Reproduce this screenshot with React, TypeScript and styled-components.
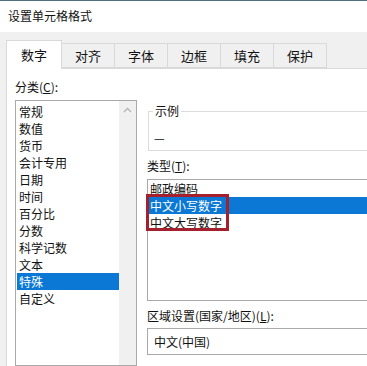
import styled, { createGlobalStyle } from "styled-components";

const GlobalStyle = createGlobalStyle`
  html, body {
    margin: 0;
    padding: 0;
    background: #f0f0f0;
  }
  body {
    font-family: "Noto Sans CJK SC", "Noto Sans", sans-serif;
    font-size: 12px;
    color: #1a1a1a;
  }
`;

const colors = {
  face: "#f0f0f0",
  white: "#ffffff",
  tabBorder: "#d9d9d9",
  listBorder: "#a9a9a9",
  groupBorder: "#dcdcdc",
  select: "#0a78d4",
  red: "#a3202c",
};

const Dialog = styled.div`
  width: 367px;
  height: 366px;
  overflow: hidden;
  background: ${colors.face};
  display: flex;
  flex-direction: column;
`;

const TitleBar = styled.div`
  height: 31px;
  flex: none;
  background: ${colors.white};
  border-top: 1px solid #4f6f80;
  padding-left: 8px;
  line-height: 29px;
  font-size: 12px;
  color: #111;
`;

const Body = styled.div`
  flex: 1;
  padding: 8px 0 0 6px;
  display: flex;
  flex-direction: column;
  min-height: 0;
`;

const TabStrip = styled.div`
  display: flex;
  align-items: flex-end;
  height: 28px;
  flex: none;
  position: relative;
  z-index: 1;
`;

const Tab = styled.div<{ $active?: boolean }>`
  width: ${(p) => (p.$active ? 56 : 53)}px;
  height: ${(p) => (p.$active ? 29 : 25)}px;
  margin-bottom: ${(p) => (p.$active ? -1 : 0)}px;
  box-sizing: border-box;
  border: 1px solid ${colors.tabBorder};
  border-bottom: ${(p) => (p.$active ? "none" : `1px solid ${colors.tabBorder}`)};
  border-left: ${(p) => (p.$active ? `1px solid ${colors.tabBorder}` : "none")};
  background: ${(p) => (p.$active ? colors.white : "#f0f0f0")};
  display: flex;
  align-items: center;
  justify-content: center;
  font-size: 13px;
  padding-bottom: ${(p) => (p.$active ? 2 : 0)}px;
  color: #111;
`;

const Panel = styled.div`
  flex: 1;
  background: ${colors.white};
  border-left: 1px solid ${colors.tabBorder};
  border-top: 1px solid ${colors.tabBorder};
  display: grid;
  grid-template-columns: 122px 260px;
  column-gap: 10px;
  padding: 10px 0 0 8px;
  min-height: 0;
`;

const Column = styled.div`
  display: flex;
  flex-direction: column;
  min-height: 0;
`;

const Label = styled.div`
  line-height: 16px;
  height: 16px;
  color: #111;
`;

const CategoryList = styled.div`
  margin-top: 5px;
  height: 300px;
  border: 1px solid ${colors.listBorder};
  display: flex;
  background: ${colors.white};
`;

const Items = styled.div`
  flex: 1;
  padding: 2px 0 0 1px;
  display: flex;
  flex-direction: column;
`;

const Item = styled.div<{ $selected?: boolean }>`
  height: 17px;
  line-height: 17px;
  padding-left: 2px;
  background: ${(p) => (p.$selected ? colors.select : "transparent")};
  color: ${(p) => (p.$selected ? "#ffffff" : "#111")};
  white-space: nowrap;
`;

const ScrollBar = styled.div`
  width: 17px;
  background: ${colors.face};
  display: flex;
  justify-content: center;
  padding-top: 6px;
`;

const GroupBox = styled.fieldset`
  margin: 24px 0 0 1px;
  padding: 0 6px 0 4px;
  height: 48px;
  box-sizing: border-box;
  border: 1px solid ${colors.groupBorder};
  border-right: none;
  min-width: 0;
`;

const Legend = styled.legend`
  padding: 0 2px;
  line-height: 16px;
  font-size: 12px;
  color: #111;
`;

const Sample = styled.div`
  line-height: 16px;
  padding-top: 11px;
  padding-left: 1px;
  color: #111;
`;

const TypeLabel = styled(Label)`
  margin-top: 7px;
`;

const TypeList = styled.div`
  position: relative;
  margin-top: 5px;
  height: 122px;
  box-sizing: border-box;
  border: 1px solid ${colors.listBorder};
  border-right: none;
  padding-left: 1px;
`;

const TypeItem = styled(Item)`
  padding-left: 1px;
`;

const Highlight = styled.div`
  position: absolute;
  left: -2px;
  top: 14px;
  width: 83px;
  height: 37px;
  box-sizing: border-box;
  border: 3px solid ${colors.red};
  pointer-events: none;
`;

const LocaleLabel = styled(Label)`
  margin-top: 7px;
`;

const Combo = styled.div`
  margin-top: 4px;
  height: 27px;
  box-sizing: border-box;
  border: 1px solid ${colors.listBorder};
  border-right: none;
  line-height: 25px;
  padding-left: 6px;
  color: #111;
`;

const categories = [
  "常规",
  "数值",
  "货币",
  "会计专用",
  "日期",
  "时间",
  "百分比",
  "分数",
  "科学记数",
  "文本",
  "特殊",
  "自定义",
];

const tabs = ["数字", "对齐", "字体", "边框", "填充", "保护"];

const UpArrow = () => (
  <svg width="9" height="6" viewBox="0 0 9 6">
    <path d="M1 5 L4.5 1.5 L8 5" fill="none" stroke="#b5b5b5" strokeWidth="1.3" />
  </svg>
);

export default function App() {
  return (
    <>
      <GlobalStyle />
      <Dialog>
        <TitleBar>设置单元格格式</TitleBar>
        <Body>
          <TabStrip>
            {tabs.map((t, i) => (
              <Tab key={t} $active={i === 0}>
                {t}
              </Tab>
            ))}
          </TabStrip>
          <Panel>
            <Column>
              <Label>分类(<u>C</u>):</Label>
              <CategoryList>
                <Items>
                  {categories.map((c) => (
                    <Item key={c} $selected={c === "特殊"}>
                      {c}
                    </Item>
                  ))}
                </Items>
                <ScrollBar>
                  <UpArrow />
                </ScrollBar>
              </CategoryList>
            </Column>
            <Column>
              <GroupBox>
                <Legend>示例</Legend>
                <Sample>—</Sample>
              </GroupBox>
              <TypeLabel>类型(<u>T</u>):</TypeLabel>
              <TypeList>
                <TypeItem>邮政编码</TypeItem>
                <TypeItem $selected>中文小写数字</TypeItem>
                <TypeItem>中文大写数字</TypeItem>
                <Highlight />
              </TypeList>
              <LocaleLabel>区域设置(国家/地区)(<u>L</u>):</LocaleLabel>
              <Combo>中文(中国)</Combo>
            </Column>
          </Panel>
        </Body>
      </Dialog>
    </>
  );
}
